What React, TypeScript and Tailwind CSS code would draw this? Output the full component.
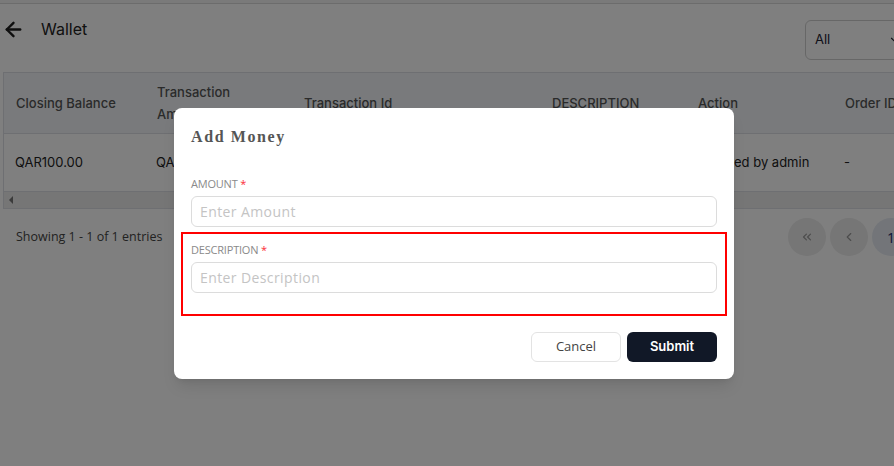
import { ArrowLeft, ChevronDown, ChevronLeft, ChevronsLeft } from 'lucide-react';

const headers = [
  { label: 'Closing Balance', w: 'w-[141px]' },
  { label: 'Transaction Amount', w: 'w-[147px]' },
  { label: 'Transaction Id', w: 'w-[248px]' },
  { label: 'DESCRIPTION', w: 'w-[146px]' },
  { label: 'Action', w: 'w-[147px]' },
  { label: 'Order ID', w: 'w-[120px]' },
];

const row = ['QAR100.00', 'QAR100.00', 'TXN8842196', 'Added money', 'Credited by admin', '-'];

function FieldLabel({ text }: { text: string }) {
  return (
    <label className="block text-[11px] leading-[14px] uppercase text-[#8a8a8a] tracking-[-0.2px]">
      {text} <span className="text-red-500">*</span>
    </label>
  );
}

function WalletPage() {
  return (
    <div className="w-[1040px] h-[466px] bg-white font-['Inter',sans-serif] text-[#333]">
      <div className="h-[4px] border-b border-[#d9d9d9] bg-[#f4f4f4]" />
      <div className="flex items-start h-[50px] pl-[2px]">
        <div className="flex items-center h-[50px]">
          <ArrowLeft className="w-[23px] h-[23px] text-[#1f1f1f]" strokeWidth={2.5} />
          <span className="ml-[16px] text-[16px] text-[#222]">Wallet</span>
        </div>
        <div className="ml-auto mt-[16px] w-[235px] h-[40px] border border-[#cfcfcf] rounded-[6px] flex items-center pl-[9px] text-[13px] text-[#223]">
          <span>All</span>
          <ChevronDown className="w-[14px] h-[14px] ml-[58px]" />
        </div>
      </div>
      <div className="ml-[3px] mt-[18px] border border-[#dcdfe4]">
        <table className="table-fixed border-collapse text-left text-[13px]">
          <thead>
            <tr className="bg-[#f2f5f9] h-[60px]">
              {headers.map((h) => (
                <th key={h.label} className={`${h.w} font-medium text-[#555] px-[12px] leading-[22px] align-middle`}>
                  {h.label}
                </th>
              ))}
            </tr>
          </thead>
          <tbody>
            <tr className="h-[58px] border-t border-[#dcdfe4]">
              {row.map((c, i) => (
                <td key={i} className="px-[11px] text-[#222]">
                  {c}
                </td>
              ))}
            </tr>
          </tbody>
        </table>
        <div className="h-[17px] bg-[#ececec] border-t border-[#dcdfe4] flex items-center pl-[5px]">
          <span className="w-0 h-0 border-y-[4px] border-y-transparent border-r-[4px] border-r-[#777]" />
        </div>
      </div>
      <div className="flex items-center mt-[9px] pl-[16px] font-['Open_Sans',sans-serif]">
        <span className="w-[772px] text-[12.5px] text-[#444]">Showing 1 - 1 of 1 entries</span>
        <div className="flex gap-[4px]">
          <span className="w-[38px] h-[38px] rounded-full bg-[#ececec] flex items-center justify-center text-[#999]">
            <ChevronsLeft className="w-[14px] h-[14px]" />
          </span>
          <span className="w-[38px] h-[38px] rounded-full bg-[#ececec] flex items-center justify-center text-[#999]">
            <ChevronLeft className="w-[14px] h-[14px]" />
          </span>
          <span className="w-[38px] h-[38px] rounded-full bg-[#e6ebf3] flex items-center justify-center text-[14px] text-[#1b2a6b]">
            1
          </span>
        </div>
      </div>
    </div>
  );
}

export default function App() {
  return (
    <div className="relative w-[894px] h-[466px] overflow-hidden">
      <WalletPage />
      <div className="absolute inset-0 bg-black/50">
        <div className="ml-[174px] mt-[108px] w-[560px] bg-white rounded-[8px] px-[17px] pt-[20px] pb-[17px] shadow-lg">
          <h2 className="font-['Liberation_Serif',serif] font-bold text-[16px] leading-[18px] tracking-[1.6px] text-[#555]">
            Add Money
          </h2>
          <div className="mt-[31px] font-['Open_Sans',sans-serif]">
            <FieldLabel text="Amount" />
            <input
              placeholder="Enter Amount"
              className="mt-[5px] w-full h-[31px] border border-[#dcdcdc] rounded-[6px] px-[8px] text-[14px] tracking-[0.4px] placeholder:text-[#c4c4c4] outline-none"
            />
          </div>
          <div className="-mx-[10px] mt-[5px] border-2 border-[#f00] px-[8px] pt-[9px] pb-[21px] font-['Open_Sans',sans-serif]">
            <FieldLabel text="Description" />
            <input
              placeholder="Enter Description"
              className="mt-[5px] w-full h-[31px] border border-[#dcdcdc] rounded-[6px] px-[8px] text-[14px] tracking-[0.4px] placeholder:text-[#c4c4c4] outline-none"
            />
          </div>
          <div className="flex justify-end gap-[6px] mt-[16px]">
            <button className="w-[90px] h-[30px] border border-[#e3e3e3] rounded-[6px] text-[13px] text-[#444] font-['Open_Sans',sans-serif]">
              Cancel
            </button>
            <button className="w-[90px] h-[30px] bg-[#111827] rounded-[6px] text-[13px] font-semibold text-white font-['Inter',sans-serif]">
              Submit
            </button>
          </div>
        </div>
      </div>
    </div>
  );
}
